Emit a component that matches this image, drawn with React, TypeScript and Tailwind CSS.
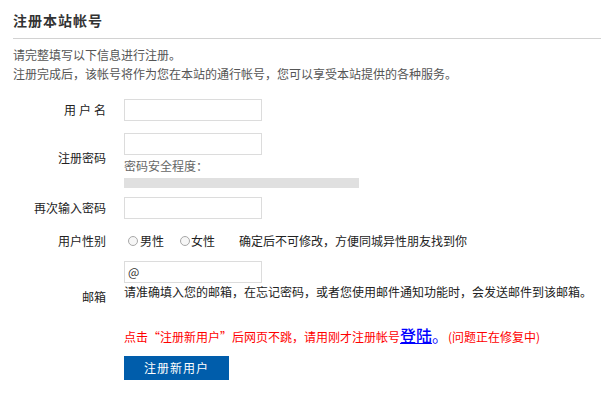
import React from 'react'

const font = "font-['Noto_Sans_CJK_SC','Noto_Sans_CJK_JP',sans-serif]"

function Label({ children, className = '' }: { children: React.ReactNode; className?: string }) {
  return (
    <div className={`w-[93px] shrink-0 text-right text-[#222] leading-[20px] ${className}`}>{children}</div>
  )
}

function Field({ children }: { children?: React.ReactNode }) {
  return (
    <div className="w-[138px] h-[22px] border border-[#dcdcdc] bg-white flex items-center pl-[3px] text-[#333] leading-none">
      {children}
    </div>
  )
}

function Radio() {
  return <span className="inline-block w-[10px] h-[10px] rounded-full border border-[#a8a8a8] bg-[#f6f6f6]" />
}

export default function App() {
  return (
    <div lang="zh-CN" className={`w-[601px] h-[403px] bg-white text-[12px] ${font}`}>
      {/* Title */}
      <div className="ml-[13px] h-[39px] border-b border-[#d2d2d2] pt-[10px]">
        <h2 className="text-[14px] font-bold tracking-[1px] leading-[20px] text-[#333]">注册本站帐号</h2>
      </div>

      {/* Intro */}
      <div className="pl-[13px] pt-[6px] leading-[19px] text-[#555]">
        <p>请完整填写以下信息进行注册。</p>
        <p>注册完成后，该帐号将作为您在本站的通行帐号，您可以享受本站提供的各种服务。</p>
      </div>

      {/* Form */}
      <div className="pl-[13px]">
        <div className="mt-[16px] flex items-center gap-[18px] h-[22px]">
          <Label>
            <span className="tracking-[3px] -mr-[3px]">用户名</span>
          </Label>
          <Field />
        </div>

        <div className="mt-[12px] flex items-center gap-[18px]">
          <Label className="pb-[5px]">注册密码</Label>
          <div className="flex flex-col">
            <Field />
            <p className="mt-[1px] leading-[20px] text-[#666]">密码安全程度：</p>
            <div className="mt-[2px] w-[235px] h-[10px] bg-[#e0e0e0]" />
          </div>
        </div>

        <div className="mt-[9px] flex items-center gap-[18px] h-[22px]">
          <Label>再次输入密码</Label>
          <Field />
        </div>

        <div className="mt-[10px] flex items-center gap-[18px] h-[24px]">
          <Label>用户性别</Label>
          <div className="flex items-center text-[#222]">
            <span className="ml-[4px] flex"><Radio /></span>
            <span className="ml-[2px]">男性</span>
            <span className="ml-[16px] flex"><Radio /></span>
            <span className="ml-[1px]">女性</span>
            <span className="ml-[24px]">确定后不可修改，方便同城异性朋友找到你</span>
          </div>
        </div>

        <div className="mt-[8px] flex items-start gap-[18px]">
          <Label className="pt-[26px]">邮箱</Label>
          <div className="flex flex-col">
            <Field>@</Field>
            <p className="leading-[18px] text-[#222] whitespace-nowrap">
              请准确填入您的邮箱，在忘记密码，或者您使用邮件通知功能时，会发送邮件到该邮箱。
            </p>
          </div>
        </div>

        <div className="mt-[16px] flex gap-[18px]">
          <div className="w-[93px] shrink-0" />
          <p className="leading-[24px] text-[#ff0000] whitespace-nowrap">
            点击“注册新用户”后网页不跳，请用刚才注册帐号
            <a href="#" className="text-[16px] font-medium text-[#0000ff] underline">登陆</a>
            <span className="text-[16px] text-[#0000ff]">。</span>
            <span>(问题正在修复中)</span>
          </p>
        </div>

        <div className="mt-[7px] flex gap-[18px]">
          <div className="w-[93px] shrink-0" />
          <button className="w-[105px] h-[24px] bg-[#005dab] text-white text-[12px] tracking-[1px]">
            注册新用户
          </button>
        </div>
      </div>
    </div>
  )
}
